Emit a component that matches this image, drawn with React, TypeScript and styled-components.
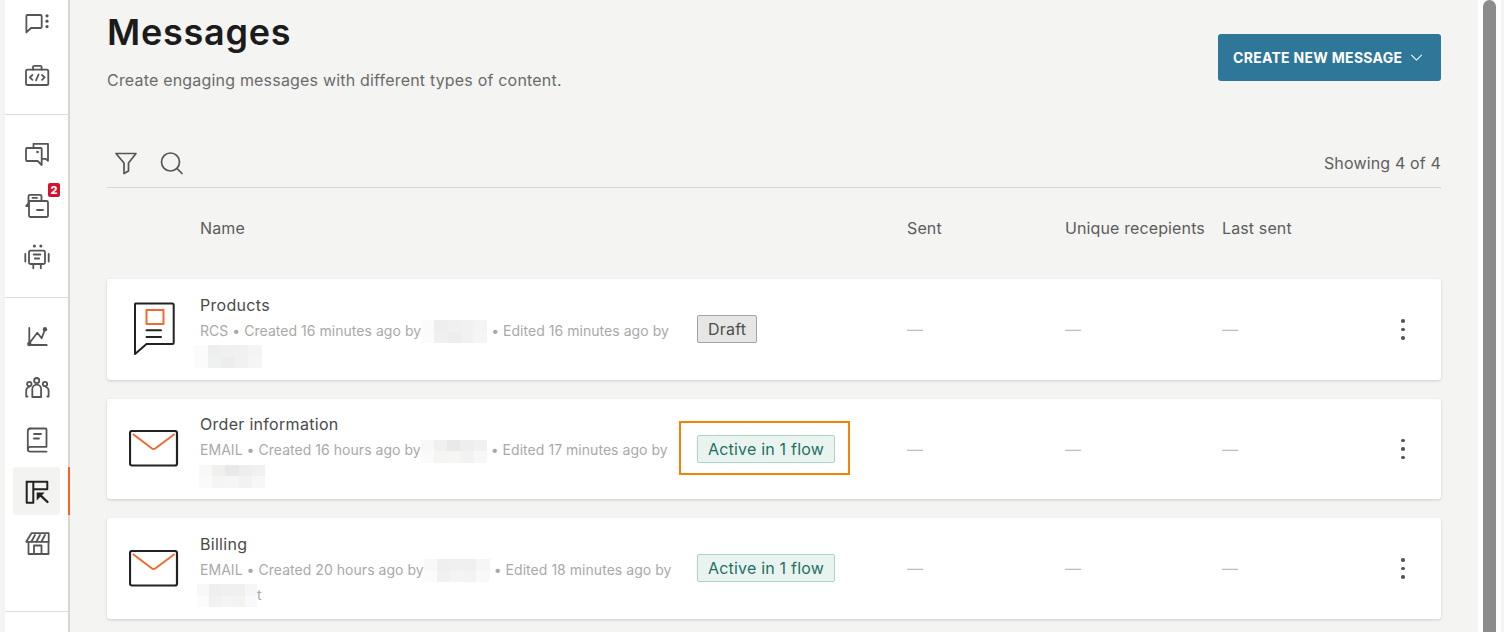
import React from "react";
import styled, { createGlobalStyle } from "styled-components";

const GlobalStyle = createGlobalStyle`
  html, body {
    margin: 0;
    height: 100%;
    overflow: hidden;
    background: #f4f4f2;
    font-family: Inter, "Noto Sans", sans-serif;
  }
  * { box-sizing: border-box; }
`;

const Shell = styled.div`
  display: flex;
  width: 1504px;
  height: 632px;
  overflow: hidden;
`;

const Sidebar = styled.nav`
  flex: 0 0 65px;
  margin-left: 5px;
  height: 632px;
  background: #fff;
  border-right: 2px solid #d6d6d4;
`;

const NavGroup = styled.div<{ $top: number; $bottom: number }>`
  display: flex;
  flex-direction: column;
  gap: 3px;
  padding: ${(p) => p.$top}px 0 ${(p) => p.$bottom}px;
  border-bottom: 1px solid #dcdcda;
`;

const NavItem = styled.div<{ $active?: boolean }>`
  position: relative;
  display: flex;
  align-items: center;
  justify-content: center;
  width: 47px;
  height: 48.5px;
  margin-left: 8px;
  border-radius: 3px;
  background: ${(p) => (p.$active ? "#f3f3f1" : "transparent")};
  color: ${(p) => (p.$active ? "#222" : "#555")};

  ${(p) =>
    p.$active &&
    `&::after {
      content: "";
      position: absolute;
      top: 0;
      bottom: 0;
      right: -10px;
      width: 2px;
      background: #f26522;
    }`}
`;

const Badge = styled.span`
  position: absolute;
  top: 2px;
  right: 0;
  width: 12px;
  height: 14px;
  border-radius: 2px;
  background: #d8112f;
  color: #fff;
  font-size: 11px;
  font-weight: 800;
  line-height: 14px;
  text-align: center;
`;

const Main = styled.main`
  flex: 1;
  min-width: 0;
  padding: 8px 37px 0;
`;

const Header = styled.header`
  display: flex;
  justify-content: space-between;
  height: 125px;
`;

const Title = styled.h1`
  margin: 0;
  color: #1b1b1b;
  font-size: 36px;
  font-weight: 600;
  letter-spacing: 0.75px;
  line-height: 48px;
`;

const Subtitle = styled.p`
  margin: 12px 0 0;
  color: #6b6b6b;
  font-size: 16px;
  letter-spacing: 0.19px;
  line-height: 24px;
`;

const CreateButton = styled.button`
  display: flex;
  align-items: center;
  gap: 8px;
  width: 223px;
  height: 47px;
  margin-top: 26px;
  padding: 0 0 0 15px;
  border: 0;
  border-radius: 3px;
  background: #2e7799;
  color: #fff;
  font-family: inherit;
  font-size: 14px;
  font-weight: 700;
  letter-spacing: 0.3px;
`;

const Toolbar = styled.div`
  display: flex;
  align-items: center;
  justify-content: space-between;
  height: 55px;
  padding-top: 6px;
  border-bottom: 1px solid #d8d8d6;
`;

const ToolIcons = styled.div`
  display: flex;
  align-items: center;
  gap: 22px;
  padding-left: 7px;
  color: #555;
`;

const Showing = styled.span`
  color: #5f5f5f;
  font-size: 16px;
  letter-spacing: 0.15px;
`;

const Columns = styled.div`
  display: grid;
  grid-template-columns: 93px 707px 158px 157px 1fr 76px;
  align-items: center;
  height: 91px;
  padding-bottom: 11px;
  color: #5c5c5c;
  font-size: 16px;
  letter-spacing: 0.12px;
`;

const Card = styled.article`
  display: grid;
  grid-template-columns: 93px 497px 210px 158px 157px 1fr 40px;
  align-items: center;
  height: 100.5px;
  margin-bottom: 19px;
  border-radius: 3px;
  background: #fff;
  box-shadow: 0 1px 3px rgba(0, 0, 0, 0.16);
`;

const CardIcon = styled.div`
  display: flex;
  justify-content: center;
`;

const NameCell = styled.div`
  padding: 2px 22px 0 0;
`;

const Name = styled.div`
  color: #4a4a4a;
  font-size: 16px;
  letter-spacing: 0.3px;
  line-height: 24px;
`;

const Meta = styled.div`
  margin-top: 1px;
  color: #a9a9a9;
  font-size: 14px;
  letter-spacing: 0.04px;
  line-height: 25px;
`;

const Patch = styled.span<{ $w: number; $shift?: number }>`
  display: inline-flex;
  flex-wrap: wrap;
  width: ${(p) => p.$w}px;
  height: 23px;
  margin: -2px 0 -2px ${(p) => p.$shift ?? 0}px;
  vertical-align: middle;
`;

const PatchCell = styled.i<{ $tone: string }>`
  width: 20%;
  height: 50%;
  background: ${(p) => p.$tone};
`;

const Pill = styled.span<{ $active?: boolean }>`
  display: inline-block;
  height: 28px;
  padding: 0 10px;
  border: 1px solid ${(p) => (p.$active ? "#add2c8" : "#a3a3a3")};
  border-radius: 2px;
  background: ${(p) => (p.$active ? "#e9f4f0" : "#e6e6e4")};
  color: ${(p) => (p.$active ? "#1f6f63" : "#4d4d4d")};
  font-size: 16px;
  letter-spacing: 0.2px;
  line-height: 26px;
  white-space: nowrap;
`;

const PillFrame = styled.span`
  position: relative;
  display: inline-block;
  line-height: 0;

  &::after {
    content: "";
    position: absolute;
    inset: -14px -15px -12px -18px;
    border: 2px solid #f58207;
  }
`;

const Dash = styled.span`
  color: #bdbdbd;
  font-size: 16px;
`;

const Dots = styled.div`
  display: flex;
  flex-direction: column;
  align-items: center;
  gap: 5px;
  width: 4px;

  i {
    width: 3.5px;
    height: 3.5px;
    border-radius: 50%;
    background: #555;
  }
`;

const Scrollbar = styled.div`
  flex: 0 0 26px;
  height: 632px;
  padding-left: 5px;
  background: #fff;
  border-right: 3px solid #f4f4f2;

  &::before {
    content: "";
    display: block;
    width: 13px;
    height: 632px;
    border-radius: 7px 7px 0 0;
    background: #8c8c8c;
  }
`;

const Glyph = ({ children }: { children: React.ReactNode }) => (
  <svg
    width="32"
    height="32"
    viewBox="0 0 32 32"
    fill="none"
    stroke="currentColor"
    strokeWidth="1.8"
    strokeLinecap="round"
    strokeLinejoin="round"
  >
    {children}
  </svg>
);

const navTop = [
  <Glyph key="chat">
    <path d="M6.400 7h13a1.300 1.300 0 0 1 1.300 1.300v10.400a1.300 1.300 0 0 1-1.300 1.300H10l-4.600 4.400V8A1 1 0 0 1 6.400 7z" />
    <g fill="currentColor" stroke="none">
      <circle cx="26" cy="7.800" r="1.600" />
      <circle cx="26" cy="13.200" r="1.600" />
      <circle cx="26" cy="18.600" r="1.600" />
    </g>
  </Glyph>,
  <Glyph key="code">
    <rect x="5" y="9.700" width="22.300" height="15.300" rx="1.600" />
    <path d="M12 9.700V7a1.200 1.200 0 0 1 1.200-1.200h6.200A1.200 1.200 0 0 1 20.600 7v2.700" />
    <path d="M11.400 15l-2.600 2.400 2.600 2.400M21 15l2.600 2.400L21 19.800M17.600 14.500l-2.600 5.800" />
  </Glyph>,
];

const navMiddle = [
  <Glyph key="copy">
    <path d="M12.500 9.500V5.800h14.500v17l-2.500-2h-3.500" />
    <path d="M6 10h13.700a1 1 0 0 1 1 1v16l-4-4H6a1 1 0 0 1-1-1V11a1 1 0 0 1 1-1z" />
    <circle cx="16.500" cy="14" r="1.300" fill="currentColor" stroke="none" />
  </Glyph>,
  <Glyph key="drawers">
    <path d="M8.500 5.800h10.500a1.500 1.500 0 0 1 1.500 1.500v4.700M8 17H5.200l2.300-3V7a1.200 1.200 0 0 1 1-1.200" />
    <path d="M8 12h17.500a1.500 1.500 0 0 1 1.500 1.500v13a1.500 1.500 0 0 1-1.500 1.500h-16A1.500 1.500 0 0 1 8 26.500z" />
    <path d="M11.500 8.900h4.500M16 21h6" />
  </Glyph>,
  <Glyph key="bot">
    <rect x="8" y="9.700" width="16" height="13.300" rx="1.500" />
    <path d="M4.300 13v7.600M27.700 13v7.600M12.300 23v4.300M19.800 23v4.300M12.600 13.500h6.800M13.800 17.500h4.400" />
    <g fill="currentColor" stroke="none">
      <circle cx="13.400" cy="5" r="1.500" />
      <circle cx="19.800" cy="5" r="1.500" />
    </g>
  </Glyph>,
];

const navBottom = [
  <Glyph key="chart">
    <path d="M8.300 7v17h17.400M8.300 22.300l8-10.600 4.400 5.600L24 8.300" />
    <g fill="currentColor" stroke="none">
      <circle cx="24" cy="8.300" r="2.200" />
      <circle cx="8.300" cy="23" r="2.200" />
    </g>
  </Glyph>,
  <Glyph key="people">
    <circle cx="15.700" cy="8.600" r="2.600" />
    <path d="M11.300 25v-8a4.400 4.400 0 0 1 8.800 0v8z" />
    <circle cx="8.300" cy="12" r="2.200" />
    <circle cx="24" cy="12" r="2.200" />
    <path d="M6.500 24.500H5.200V18.700A3.800 3.800 0 0 1 8 15M25 15a3.800 3.800 0 0 1 2.600 3.700v5.800h-1.200" />
  </Glyph>,
  <Glyph key="book">
    <path d="M9.200 4.500h15.300a1 1 0 0 1 1 1v17.300H9.200A2.500 2.500 0 0 0 6.800 25.200 2.400 2.400 0 0 0 9.200 27.600h16.300" />
    <path d="M6.800 25.200V7a2.500 2.500 0 0 1 2.400-2.500M13 10h7M13 14.500h5" />
  </Glyph>,
  <Glyph key="layout">
    <path d="M5.700 6.700h20.600v7.600h-14M12.300 6.700v21H5.700v-21" strokeWidth="2" strokeLinecap="square" />
    <path d="M26.500 27l-7-6.600" strokeWidth="2.400" />
    <path d="M15.700 17.500h8L15.700 25.500z" fill="currentColor" stroke="none" />
  </Glyph>,
  <Glyph key="store">
    <path d="M10.500 6.200H27.700V14.800H5.200z" />
    <path d="M7.500 15v12h20V15M13 27v-8.500h7.500V27M14 8l-3.500 6.500M19 8l-3.500 6.500M24 8l-3.500 6.500" />
  </Glyph>,
];

const RcsIcon = () => (
  <svg width="44" height="54" viewBox="0 0 44 54" fill="none" strokeLinejoin="round" strokeLinecap="round">
    <path
      d="M3.200 1.500h37a1.500 1.500 0 0 1 1.500 1.500v37.500a1.500 1.500 0 0 1-1.500 1.500H14.500L3 52V3a1.500 1.500 0 0 1 .2-1.500z"
      stroke="#222"
      strokeWidth="2"
    />
    <rect x="14.500" y="8" width="17" height="14" stroke="#f26a2e" strokeWidth="2" />
    <path d="M14.500 28.300h14.500M14.500 35h14.500" stroke="#222" strokeWidth="2" />
  </svg>
);

const MailIcon = () => (
  <svg width="50" height="37" viewBox="0 0 50 37" fill="none" strokeLinejoin="round" strokeLinecap="round">
    <rect x="1" y="1" width="47" height="34.500" rx="2" stroke="#222" strokeWidth="2.200" />
    <path d="M4.500 4.500l18.500 14a2.800 2.800 0 0 0 3.200 0L45 4.500" stroke="#f26a2e" strokeWidth="2" />
  </svg>
);

const patchTones = {
  a: ["#fbfbfb", "#eeeeee", "#f0f0f0", "#f1f1f1", "#f4f4f4", "#fbfbfb", "#eef0f2", "#ededeb", "#f1f1f1", "#f5f5f5"],
  b: ["#f8f8f8", "#efefef", "#f0f0ee", "#f0f0f0", "#f6f6f6", "#fbfbfb", "#f1f1f1", "#f4f4f4", "#f3f3f1", "#f8f9fb"],
  c: ["#f8f8f8", "#f0f0ef", "#e9e9e9", "#eeeeee", "#f1f1f1", "#fafafa", "#f5f5f3", "#f6f6f4", "#f2f2f0", "#f7f7f7"],
};

const Redacted = ({ w, tones, shift }: { w: number; tones: string[]; shift?: number }) => (
  <Patch $w={w} $shift={shift}>
    {tones.map((tone, i) => (
      <PatchCell key={i} $tone={tone} />
    ))}
  </Patch>
);

const messages = [
  {
    name: "Products",
    icon: <RcsIcon />,
    line: "RCS • Created 16 minutes ago by",
    edited: " • Edited 16 minutes ago by",
    second: { w: 68, shift: -6 },
    tones: patchTones.a,
    status: "Draft",
  },
  {
    name: "Order information",
    icon: <MailIcon />,
    line: "EMAIL • Created 16 hours ago by",
    edited: " • Edited 17 minutes ago by",
    second: { w: 66, shift: -1 },
    tones: patchTones.c,
    status: "Active in 1 flow",
    framed: true,
  },
  {
    name: "Billing",
    icon: <MailIcon />,
    line: "EMAIL • Created 20 hours ago by",
    edited: " • Edited 18 minutes ago by",
    second: { w: 60, shift: -3 },
    tones: patchTones.b,
    status: "Active in 1 flow",
    tail: "t",
  },
];

export default function App() {
  return (
    <Shell>
      <GlobalStyle />
      <Sidebar>
        <NavGroup $top={0} $bottom={13.5}>
          <NavItem>{navTop[0]}</NavItem>
          <NavItem>{navTop[1]}</NavItem>
        </NavGroup>
        <NavGroup $top={15} $bottom={15.5}>
          <NavItem>{navMiddle[0]}</NavItem>
          <NavItem>
            {navMiddle[1]}
            <Badge>2</Badge>
          </NavItem>
          <NavItem>{navMiddle[2]}</NavItem>
        </NavGroup>
        <NavGroup $top={14.75} $bottom={44}>
          <NavItem>{navBottom[0]}</NavItem>
          <NavItem>{navBottom[1]}</NavItem>
          <NavItem>{navBottom[2]}</NavItem>
          <NavItem $active>{navBottom[3]}</NavItem>
          <NavItem>{navBottom[4]}</NavItem>
        </NavGroup>
      </Sidebar>

      <Main>
        <Header>
          <div>
            <Title>Messages</Title>
            <Subtitle>Create engaging messages with different types of content.</Subtitle>
          </div>
          <CreateButton>
            CREATE NEW MESSAGE
            <svg width="13" height="7" viewBox="0 0 14 8" fill="none" stroke="#fff" strokeWidth="1.200">
              <path d="M1 1l6 6 6-6" />
            </svg>
          </CreateButton>
        </Header>

        <Toolbar>
          <ToolIcons>
            <svg width="24" height="24" viewBox="0 0 24 24" fill="none" stroke="currentColor" strokeWidth="1.700" strokeLinejoin="round">
              <path d="M2 2.500h20l-7.500 9.500v8l-4.500 2.500V12z" />
            </svg>
            <svg width="24" height="24" viewBox="0 0 24 24" fill="none" stroke="currentColor" strokeWidth="1.700" strokeLinecap="round">
              <circle cx="10.500" cy="11" r="9" />
              <path d="M17 17.500l5 5" />
            </svg>
          </ToolIcons>
          <Showing>Showing 4 of 4</Showing>
        </Toolbar>

        <Columns>
          <span />
          <span>Name</span>
          <span>Sent</span>
          <span>Unique recepients</span>
          <span>Last sent</span>
        </Columns>

        {messages.map((m) => (
          <Card key={m.name}>
            <CardIcon>{m.icon}</CardIcon>
            <NameCell>
              <Name>{m.name}</Name>
              <Meta>
                {m.line}
                <Redacted w={66} tones={m.tones} />
                {m.edited}{" "}
                <Redacted w={m.second.w} shift={m.second.shift} tones={m.tones} />
                {m.tail}
              </Meta>
            </NameCell>
            <div>
              {m.framed ? (
                <PillFrame>
                  <Pill $active>{m.status}</Pill>
                </PillFrame>
              ) : (
                <Pill $active={m.status !== "Draft"}>{m.status}</Pill>
              )}
            </div>
            <Dash>—</Dash>
            <Dash>—</Dash>
            <Dash>—</Dash>
            <Dots>
              <i />
              <i />
              <i />
            </Dots>
          </Card>
        ))}
      </Main>
      <Scrollbar />
    </Shell>
  );
}
